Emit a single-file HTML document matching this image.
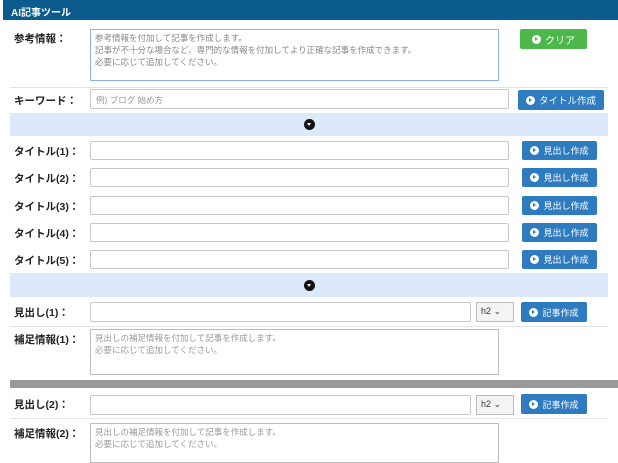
<!DOCTYPE html>
<html><head><meta charset="utf-8"><style>
*{box-sizing:border-box;margin:0;padding:0}
body{width:618px;height:450px;overflow:hidden;background:#fff;font-family:"Liberation Sans","Noto Sans CJK JP",sans-serif;position:relative;color:#333}
.a{position:absolute}
.hd{left:3px;top:0;width:615px;height:20px;background:#0b5b8f;color:#fff;font-size:10px;font-weight:bold;padding:4px 0 0 8px}
.lb{font-size:10.5px;font-weight:bold;color:#222;left:14px}
.in{border:1px solid #c8c8c8;background:#fff;border-radius:2px}
.ta{border:1px solid #bbb;background:#fff;font-size:8.5px;color:#999;line-height:12px;padding:2px 4px}
.bt{background:#2e7bbf;color:#fff;font-size:9px;border-radius:2px;display:flex;align-items:center;justify-content:center;gap:4px}
.ic{width:9px;height:9px;border-radius:50%;background:#fff;display:inline-block;position:relative}
.ic:after{content:"";position:absolute;left:3px;top:2px;border-left:3px solid currentColor;border-top:2.5px solid transparent;border-bottom:2.5px solid transparent}
.band{left:10px;width:598px;background:#dbe9fa}
.dn{width:11px;height:11px;border-radius:50%;background:#111;left:50%;margin-left:-5px}
.dn:after{content:"";position:absolute;left:3px;top:4px;border-top:3px solid #fff;border-left:2.5px solid transparent;border-right:2.5px solid transparent}
.line{left:10px;width:598px;height:1px;background:#e4e4e4}
.sel{border:1px solid #bbb;background:#f4f4f4;font-size:9px;padding:3px 4px;color:#333}
</style></head><body>
<div class="a hd">AI記事ツール</div>

<div class="a lb" style="top:31px">参考情報：</div>
<div class="a ta" style="left:90px;top:29px;width:409px;height:52px;border-color:#8ab4e0;color:#888">参考情報を付加して記事を作成します。<br>記事が不十分な場合など、専門的な情報を付加してより正確な記事を作成できます。<br>必要に応じて追加してください。</div>
<div class="a bt" style="left:520px;top:29px;width:67px;height:20px;background:#4cb84c;font-size:10px"><span class="ic" style="color:#4cb84c"></span>クリア</div>
<div class="a line" style="top:87px"></div>

<div class="a lb" style="top:93px">キーワード：</div>
<div class="a in" style="left:90px;top:89px;width:419px;height:20px;font-size:8.5px;color:#999;padding:4px 5px">例) ブログ 始め方</div>
<div class="a bt" style="left:518px;top:90px;width:86px;height:20px;font-size:9.5px"><span class="ic" style="color:#2e7bbf"></span>タイトル作成</div>

<div class="a band" style="top:113px;height:23px"><div class="a dn" style="top:6px"></div></div>

<div class="a lb" style="top:144px">タイトル(1)：</div><div class="a in" style="left:90px;top:141px;width:419px;height:19px"></div><div class="a bt" style="left:522px;top:141px;width:75px;height:19px"><span class="ic" style="color:#2e7bbf"></span>見出し作成</div>
<div class="a lb" style="top:171px">タイトル(2)：</div><div class="a in" style="left:90px;top:168px;width:419px;height:19px"></div><div class="a bt" style="left:522px;top:168px;width:75px;height:19px"><span class="ic" style="color:#2e7bbf"></span>見出し作成</div>
<div class="a lb" style="top:199px">タイトル(3)：</div><div class="a in" style="left:90px;top:196px;width:419px;height:19px"></div><div class="a bt" style="left:522px;top:196px;width:75px;height:19px"><span class="ic" style="color:#2e7bbf"></span>見出し作成</div>
<div class="a lb" style="top:226px">タイトル(4)：</div><div class="a in" style="left:90px;top:223px;width:419px;height:19px"></div><div class="a bt" style="left:522px;top:223px;width:75px;height:19px"><span class="ic" style="color:#2e7bbf"></span>見出し作成</div>
<div class="a lb" style="top:253px">タイトル(5)：</div><div class="a in" style="left:90px;top:250px;width:419px;height:19px"></div><div class="a bt" style="left:522px;top:250px;width:75px;height:19px"><span class="ic" style="color:#2e7bbf"></span>見出し作成</div>

<div class="a band" style="top:273px;height:24px"><div class="a dn" style="top:7px"></div></div>

<div class="a lb" style="top:305px">見出し(1)：</div>
<div class="a in" style="left:90px;top:302px;width:381px;height:20px"></div>
<div class="a sel" style="left:476px;top:302px;width:38px;height:20px">h2 ⌄</div>
<div class="a bt" style="left:521px;top:302px;width:66px;height:20px"><span class="ic" style="color:#2e7bbf"></span>記事作成</div>
<div class="a line" style="top:326px"></div>
<div class="a lb" style="top:332px">補足情報(1)：</div>
<div class="a ta" style="left:90px;top:329px;width:409px;height:46px">見出しの補足情報を付加して記事を作成します。<br>必要に応じて追加してください。</div>

<div class="a" style="left:10px;top:380px;width:608px;height:8px;background:#999"></div>

<div class="a lb" style="top:397px">見出し(2)：</div>
<div class="a in" style="left:90px;top:395px;width:381px;height:20px"></div>
<div class="a sel" style="left:476px;top:395px;width:38px;height:20px">h2 ⌄</div>
<div class="a bt" style="left:521px;top:394px;width:66px;height:20px"><span class="ic" style="color:#2e7bbf"></span>記事作成</div>
<div class="a line" style="top:418px"></div>
<div class="a lb" style="top:426px">補足情報(2)：</div>
<div class="a ta" style="left:90px;top:423px;width:409px;height:40px">見出しの補足情報を付加して記事を作成します。<br>必要に応じて追加してください。</div>
</body></html>
